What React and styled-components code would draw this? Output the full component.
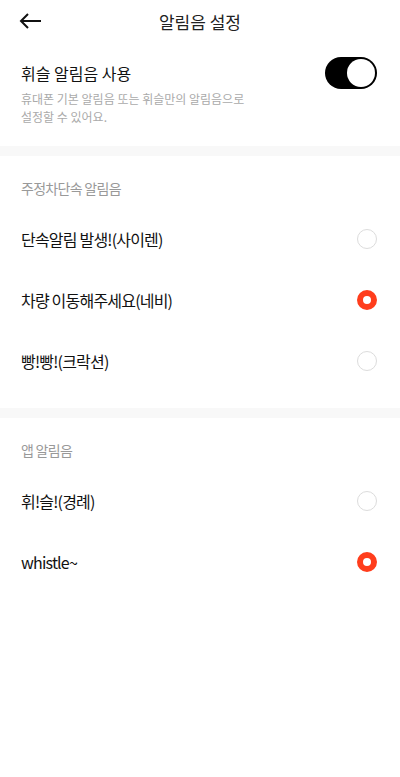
import React, { useState } from 'react'
import styled, { createGlobalStyle } from 'styled-components'

const Global = createGlobalStyle`
  body {
    margin: 0;
    background: #fff;
    font-family: "Noto Sans CJK KR", "Noto Sans", sans-serif;
    color: #222;
  }
`

const Page = styled.div`
  width: 400px;
  min-height: 777px;
  background: #fff;
`

const Header = styled.div`
  height: 42px;
  display: flex;
  align-items: center;
  justify-content: center;
  position: relative;
`

const BackButton = styled.button`
  position: absolute;
  left: 17px;
  top: 9px;
  width: 26px;
  height: 24px;
  padding: 0;
  border: none;
  background: none;
  display: flex;
  align-items: center;
  justify-content: center;
`

const Title = styled.h1`
  margin: 0;
  font-size: 17px;
  font-weight: 400;
  letter-spacing: 0;
  color: #222;
`

const TopSection = styled.div`
  display: flex;
  justify-content: space-between;
  align-items: flex-start;
  padding: 14px 23px 20px 21px;
`

const TopText = styled.div`
  display: flex;
  flex-direction: column;
`

const TopTitle = styled.div`
  font-size: 16px;
  line-height: 34px;
  letter-spacing: 0;
  color: #111;
`

const Desc = styled.div`
  font-size: 12px;
  line-height: 18px;
  letter-spacing: 0;
  color: #aaa;
`

const Toggle = styled.button`
  margin-top: 1px;
  width: 52px;
  height: 32px;
  border-radius: 16px;
  border: none;
  padding: 2px;
  background: ${p => (p.on ? '#000' : '#ddd')};
  display: flex;
  justify-content: ${p => (p.on ? 'flex-end' : 'flex-start')};
  cursor: pointer;
`

const Knob = styled.span`
  width: 28px;
  height: 28px;
  border-radius: 50%;
  background: #fff;
`

const Divider = styled.div`
  height: 10px;
  background: #f8f8f8;
`

const Section = styled.div`
  padding-bottom: ${p => p.bottom || 0}px;
`

const Label = styled.div`
  padding: 22px 21px 10px;
  font-size: 14px;
  line-height: 20px;
  letter-spacing: -0.05em;
  color: #999;
`

const Row = styled.label`
  height: 61px;
  display: flex;
  align-items: center;
  justify-content: space-between;
  padding: 0 23px 0 21px;
  cursor: pointer;
`

const RowText = styled.span`
  font-size: 16px;
  letter-spacing: -0.05em;
  color: #111;
`

const Radio = styled.span`
  width: 20px;
  height: 20px;
  box-sizing: border-box;
  border-radius: 50%;
  border: ${p => (p.checked ? '6px solid #ff3d1c' : '1.5px solid #dcdcdc')};
  background: #fff;
`

const parking = ['단속알림 발생!(사이렌)', '차량 이동해주세요(네비)', '빵!빵!(크락션)']
const app = ['휘!슬!(경례)', 'whistle~']

export default function App() {
  const [on, setOn] = useState(true)
  const [park, setPark] = useState(1)
  const [appSel, setAppSel] = useState(1)

  return (
    <Page>
      <Global />
      <Header>
        <BackButton>
          <svg width="23" height="16" viewBox="0 0 23 16" fill="none" stroke="#111" strokeWidth="2">
            <path d="M22 8H2" />
            <path d="M9 1L2 8l7 7" />
          </svg>
        </BackButton>
        <Title>알림음 설정</Title>
      </Header>

      <TopSection>
        <TopText>
          <TopTitle>휘슬 알림음 사용</TopTitle>
          <Desc>휴대폰 기본 알림음 또는 휘슬만의 알림음으로<br />설정할 수 있어요.</Desc>
        </TopText>
        <Toggle on={on ? 1 : 0} onClick={() => setOn(!on)}>
          <Knob />
        </Toggle>
      </TopSection>

      <Divider />

      <Section bottom={17}>
        <Label>주정차단속 알림음</Label>
        {parking.map((t, i) => (
          <Row key={t} onClick={() => setPark(i)}>
            <RowText>{t}</RowText>
            <Radio checked={park === i} />
          </Row>
        ))}
      </Section>

      <Divider />

      <Section>
        <Label>앱 알림음</Label>
        {app.map((t, i) => (
          <Row key={t} onClick={() => setAppSel(i)}>
            <RowText>{t}</RowText>
            <Radio checked={appSel === i} />
          </Row>
        ))}
      </Section>
    </Page>
  )
}
